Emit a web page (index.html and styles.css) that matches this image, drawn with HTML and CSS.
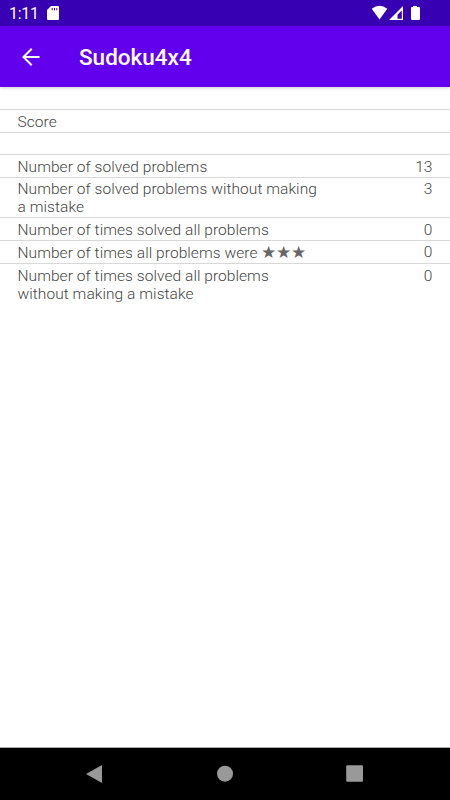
FILE: index.html
```html
<!DOCTYPE html>
<html lang="en">
<head>
  <meta charset="utf-8">
  <title>Sudoku4x4</title>
  <link rel="stylesheet" href="styles.css">
</head>
<body>
  <div class="status-bar">
    <span class="clock">1:11</span>
    <svg class="sd-card" width="12" height="14" viewBox="0 0 12 14">
      <path fill="#fff" d="M4 0h7q1 0 1 1v12q0 1-1 1H1q-1 0-1-1V4z"/>
      <path stroke="#3700b3" stroke-width="1" d="M5.2 2v2.3M7.5 2v2.3M9.8 2v2.3"/>
    </svg>
    <svg class="status-icons" width="50" height="16" viewBox="0 0 50 16">
      <path fill="#fff" d="M.7 3.700Q8.500-2.300 16.300 3.700L8.500 14.500z"/>
      <path fill="#fff" fill-rule="evenodd" d="M32 1V15H18zM30.800 5.500L26.500 9.800V13.700h4.300z"/>
      <path fill="#fff" d="M42 2V1h4v1h2q1 0 1 1v11q0 1-1 1h-7q-1 0-1-1V3q0-1 1-1z"/>
    </svg>
  </div>

  <header>
    <a href="#" class="back">
      <svg width="18" height="18" viewBox="0 0 18 18">
        <path fill="none" stroke="#fff" stroke-width="2" d="M17.500 9H2M9.700 .8L1.500 9l8.200 8.200"/>
      </svg>
    </a>
    <h1>Sudoku4x4</h1>
  </header>

  <main>
    <div class="row"></div>
    <div class="row"><p>Score</p></div>
    <div class="row"></div>
    <div class="row"><p>Number of solved problems</p><span>13</span></div>
    <div class="row"><p>Number of solved problems without making a mistake</p><span>3</span></div>
    <div class="row"><p>Number of times solved all problems</p><span>0</span></div>
    <div class="row stars-row">
      <p>Number of times all problems were <b class="stars">★★★</b></p><span>0</span>
    </div>
    <div class="row"><p>Number of times solved all problems without making a mistake</p><span>0</span></div>
  </main>

  <nav>
    <svg width="18" height="18" viewBox="0 0 18 18"><path d="M0 9L16 0V18z"/></svg>
    <svg width="18" height="18" viewBox="0 0 18 18"><circle cx="9" cy="8.700" r="8"/></svg>
    <svg width="18" height="18" viewBox="0 0 18 18"><rect x=".2" y=".2" width="16.800" height="16.500" rx="1"/></svg>
  </nav>
</body>
</html>
```
FILE: styles.css
```css
body {
  margin: 0;
  height: 800px;
  display: flex;
  flex-direction: column;
  overflow: hidden;
  background: #fff;
  font-family: Roboto, sans-serif;
}
.status-bar {
  display: flex;
  align-items: center;
  height: 26px;
  padding: 0 29px 0 9px;
  background: #3700b3;
  color: #fff;
}
.clock {
  width: 38px;
  padding-top: 1px;
  font-size: 16px;
  letter-spacing: -0.3px;
}
.status-icons {
  margin-left: auto;
}
header {
  display: flex;
  align-items: center;
  height: 61px;
  padding-left: 22px;
  background: #6200ee;
  color: #fff;
  box-shadow: 0 1px 3px rgba(0, 0, 0, 0.2);
}
.back {
  display: flex;
  width: 57px;
}
h1 {
  margin: 1px 0 0;
  font-size: 22.5px;
  font-weight: 500;
}
main {
  flex: 1;
  padding-top: 0.5px;
  color: #444;
  font-size: 15.5px;
  font-weight: 300;
  line-height: 18px;
  letter-spacing: 0.06px;
}
.row {
  display: flex;
  justify-content: space-between;
  box-sizing: border-box;
  min-height: 22.5px;
  padding: 2.5px 17.5px 1px;
  border-bottom: 1px solid #d8d8d8;
}
.row:last-child {
  border-bottom: none;
}
.row p {
  width: 306px;
  margin: 0;
}
.stars-row {
  height: 23.5px;
}
.stars-row p {
  padding-top: 0.5px;
}
.stars {
  color: #666;
  font-size: 17.3px;
  font-weight: normal;
  line-height: 1;
}
nav {
  display: flex;
  justify-content: center;
  align-items: center;
  gap: 112px;
  height: 52px;
  border-top: 1px solid #aaa;
  background: #000;
  fill: #999;
}
```
